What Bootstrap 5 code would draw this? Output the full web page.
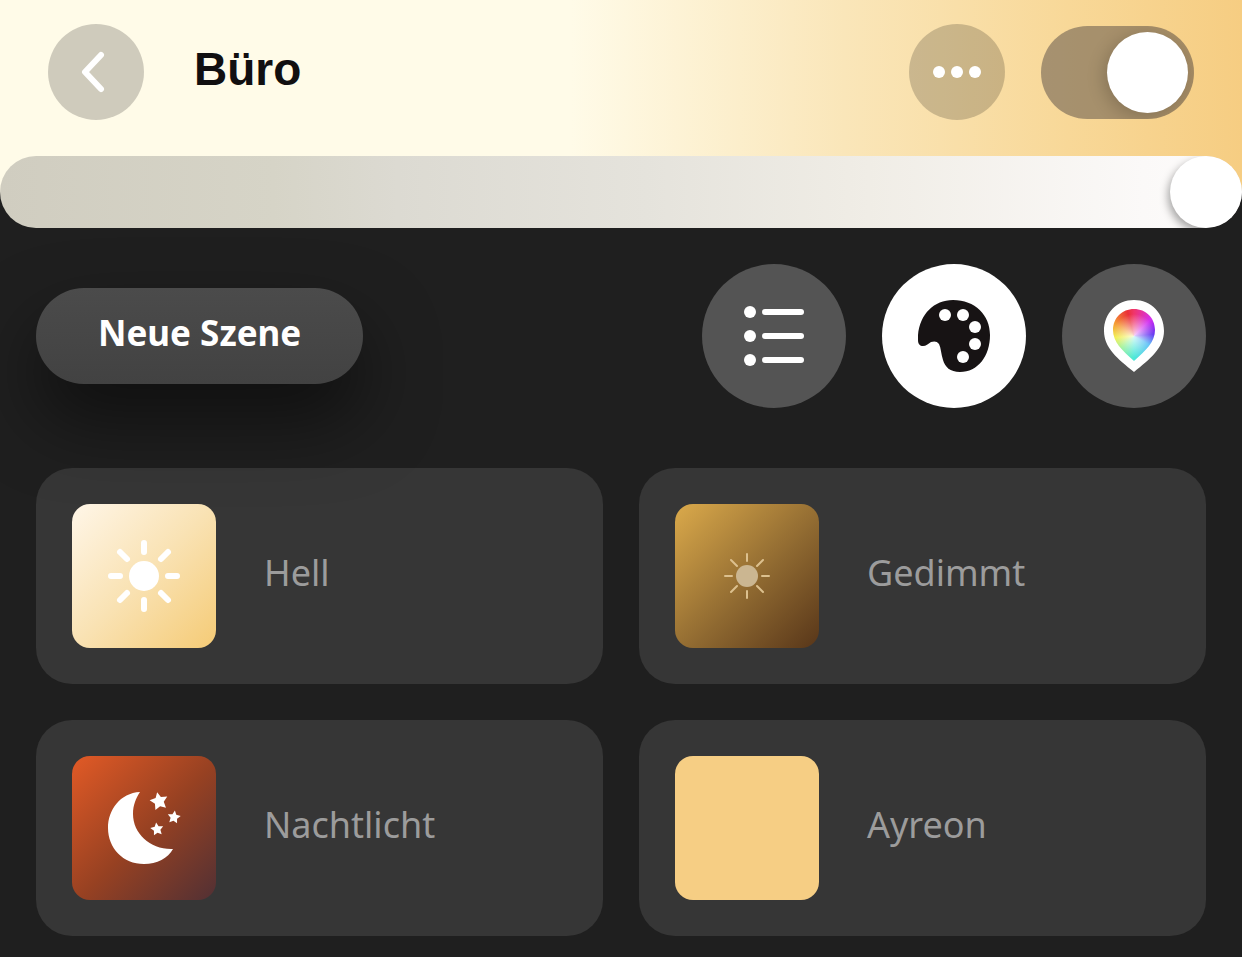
<!DOCTYPE html>
<html lang="de">
<head>
<meta charset="utf-8">
<meta name="viewport" content="width=device-width, initial-scale=1">
<title>Büro</title>
<link href="https://cdn.jsdelivr.net/npm/bootstrap@5.3.0/dist/css/bootstrap.min.css" rel="stylesheet">
<style>
body{background:#1f1f1f;color:#fff;font-family:"Noto Sans","Open Sans",sans-serif}
svg{display:block;overflow:visible}
.room-head{background:linear-gradient(90deg,#fffbe8 0%,#fffbe8 46%,#fae6b9 68%,#f8d898 86%,#f6cd82 100%);padding:24px 48px 72px;margin-bottom:-36px}
.room-title{font-family:"Liberation Sans",sans-serif;font-weight:700;font-size:46px;line-height:60px;color:#110f10;margin:0 0 6px 50px}
.head-tools,.view-group{gap:36px}
.round-btn{width:96px;height:96px;border:0;border-radius:50%;padding:0;background:rgba(0,0,0,.19);color:#fff;flex:none}
.room-switch{appearance:none;width:153px;height:93px;border:0;border-radius:47px;background:rgba(70,62,62,.46);padding:6px;margin:0;display:flex;justify-content:flex-start;flex:none;overflow:hidden}
.room-switch:checked{justify-content:flex-end}
.room-switch::before{content:"";width:81px;height:81px;border-radius:50%;background:#fff;box-shadow:-3px 4px 18px rgba(0,0,0,.2)}
.dimmer{appearance:none;display:block;width:100%;height:72px;margin:0;border-radius:36px;overflow:hidden;background:linear-gradient(90deg,#d0cdc0 0%,#d6d4c7 22%,#dcdad2 32%,#e5e3dc 52%,#f0ede6 70%,#fbf9f8 92%,#fdfcfc 100%);position:relative}
.dimmer::-webkit-slider-thumb{appearance:none;width:72px;height:72px;border-radius:50%;background:#fff;box-shadow:-2px 4px 9px rgba(0,0,0,.35)}
.scene-main{padding:36px 36px 21px}
.toolbar-row{margin-bottom:60px}
.scene-btn{height:96px;padding:0 62px 6px;border:0;border-radius:48px;background:linear-gradient(#4b4b4b,#424242);color:#fff;font-size:35px;font-weight:700;line-height:48px;box-shadow:0 36px 72px rgba(0,0,0,.5);position:relative;z-index:1}
.view-btn{width:144px;height:144px;border:0;border-radius:50%;padding:0;background:#545454;color:#fff;display:grid;place-items:center}
.view-btn.active{background:#fff;color:#171314}
.pin-outer,.pin-inner{display:block;width:60px;height:72px}
.pin-outer{background:#fff;clip-path:path("M30 0C47 0 60 13 60 31C60 48 46 59 30 72C14 59 0 48 0 31C0 13 13 0 30 0Z")}
.pin-inner{background:radial-gradient(circle at 30px 36px,#fffc 0,#fff0 22px),conic-gradient(from 0deg at 30px 36px,#f0356b,#d430f0 45deg,#5a28f0 85deg,#45b8f5 120deg,#4be8d8 180deg,#8ff090 225deg,#f0ee40 265deg,#f59a35 305deg,#ea3038 345deg,#f0356b);clip-path:path("M30 9C42 9 51 18 51 30C51 42 42 50 30 61C18 50 9 42 9 30C9 18 18 9 30 9Z")}
.scene-grid{--bs-gutter-x:36px;--bs-gutter-y:36px}
.scene-card{width:100%;padding:36px;border:0;border-radius:36px;background:#363636;color:#9c9c9c;font-size:36px;line-height:48px;gap:48px}
.scene-tile{width:144px;height:144px;border-radius:18px;display:grid;place-items:center;flex:none}
.scene-name{padding-bottom:6px}
.tile-hell{background:linear-gradient(135deg,#fff6e8,#f9e2b3 50%,#f5cb76)}
.tile-gedimmt{background:linear-gradient(135deg,#dbaa4b,#906a31 55%,#583619)}
.tile-nacht{background:linear-gradient(135deg,#e25a26,#974122 52%,#523034)}
.tile-ayreon{background:#f6ce84}
</style>
</head>
<body>
<header class="room-head d-flex align-items-center">
  <button type="button" class="round-btn" aria-label="Zurück">
    <svg width="96" height="96" fill="none" stroke="#fff" stroke-width="6" stroke-linecap="round" stroke-linejoin="round"><path d="M53 31L37 48L53 65"/></svg>
  </button>
  <h1 class="room-title">Büro</h1>
  <div class="head-tools d-flex align-items-center ms-auto">
    <button type="button" class="round-btn" aria-label="Mehr">
      <svg width="96" height="96" fill="#fff"><circle cx="30" cy="48" r="6"/><circle cx="48" cy="48" r="6"/><circle cx="66" cy="48" r="6"/></svg>
    </button>
    <input class="room-switch" type="checkbox" role="switch" aria-label="Licht" checked>
  </div>
</header>
<input class="dimmer" type="range" min="0" max="100" value="100" aria-label="Helligkeit">
<main class="scene-main">
  <div class="toolbar-row d-flex justify-content-between align-items-center">
    <button type="button" class="scene-btn">Neue Szene</button>
    <div class="view-group d-flex">
      <button type="button" class="view-btn" aria-label="Liste">
        <svg width="60" height="60" fill="#fff"><circle cx="6" cy="6" r="6"/><circle cx="6" cy="30" r="6"/><circle cx="6" cy="54" r="6"/><rect x="18" y="3" width="42" height="6" rx="3"/><rect x="18" y="27" width="42" height="6" rx="3"/><rect x="18" y="51" width="42" height="6" rx="3"/></svg>
      </button>
      <button type="button" class="view-btn active" aria-label="Szenen">
        <svg width="72" height="72"><path fill="currentColor" d="M35 0C57 0 72 15 72 35C72 56 60 72 42 72C32 72 27 67 25 60C23 54 23 48 21 44C19 41 16 41 13 42C10 44 8 46 5 46C2 46 0 44 0 40V35C2 14 16 0 35 0Z"/><g fill="#fff"><circle cx="27" cy="15" r="6"/><circle cx="45" cy="15" r="6"/><circle cx="57" cy="27" r="6"/><circle cx="57" cy="44" r="6"/><circle cx="45" cy="57" r="6"/></g></svg>
      </button>
      <button type="button" class="view-btn" aria-label="Farbe"><span class="pin-outer"><span class="pin-inner"></span></span></button>
    </div>
  </div>
  <div class="row scene-grid">
    <div class="col-6"><button type="button" class="scene-card d-flex align-items-center">
      <span class="scene-tile tile-hell"><svg width="72" height="72" viewBox="-36 -36 72 72" fill="#fff" stroke="#fff" stroke-width="6" stroke-linecap="round"><circle r="15" stroke="none"/><path d="M0-24V-33M0 24V33M-24 0H-33M24 0H33M17-17L24-24M17 17L24 24M-17 17L-24 24M-17-17L-24-24"/></svg></span>
      <span class="scene-name">Hell</span></button></div>
    <div class="col-6"><button type="button" class="scene-card d-flex align-items-center">
      <span class="scene-tile tile-gedimmt"><svg width="72" height="72" viewBox="-36 -36 72 72" fill="#cbb691" stroke="#dcc08e" stroke-width="2" stroke-linecap="round"><circle r="11" stroke="none"/><path d="M0-15V-22M0 15V22M-15 0H-22M15 0H22M10-10L16-16M10 10L16 16M-10 10L-16 16M-10-10L-16-16"/></svg></span>
      <span class="scene-name">Gedimmt</span></button></div>
    <div class="col-6"><button type="button" class="scene-card d-flex align-items-center">
      <span class="scene-tile tile-nacht"><svg width="72" height="72" fill="#fff"><defs><path id="star" d="M0-10L3-4L10-3L5 2L6 9L0 6L-6 9L-5 2L-10-3L-3-4Z"/></defs><path d="M32 0C12 1 0 18 0 36C0 56 15 72 36 72C49 72 60 66 65 57C43 58 25 42 25 22C25 13 28 6 32 0Z"/><use href="#star" transform="translate(51 9) rotate(-12) scale(.9)"/><use href="#star" transform="translate(66 25) rotate(8) scale(.65)"/><use href="#star" transform="translate(49 37) rotate(-8) scale(.65)"/></svg></span>
      <span class="scene-name">Nachtlicht</span></button></div>
    <div class="col-6"><button type="button" class="scene-card d-flex align-items-center">
      <span class="scene-tile tile-ayreon"></span>
      <span class="scene-name">Ayreon</span></button></div>
  </div>
</main>
<script src="https://cdn.jsdelivr.net/npm/bootstrap@5.3.0/dist/js/bootstrap.bundle.min.js"></script>
</body>
</html>
